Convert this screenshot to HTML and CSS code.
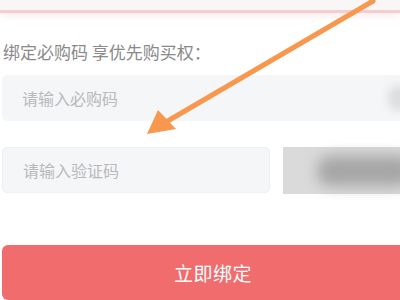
FILE: index.html
```html
<!DOCTYPE html>
<html lang="zh-CN">
<head>
    <meta charset="UTF-8">
    <title>绑定必购码</title>
    <link rel="stylesheet" href="styles.css">
</head>
<body>
    <div class="page">
        <div class="top-bar"></div>

        <div class="form">
            <div class="form-label">绑定必购码 享优先购买权：</div>

            <div class="field field-wide">
                <input type="text" placeholder="请输入必购码">
                <span class="field-blur"></span>
            </div>

            <div class="code-row">
                <div class="field field-code">
                    <input type="text" placeholder="请输入验证码">
                </div>
                <div class="captcha"><span class="captcha-text"></span></div>
            </div>

            <button class="bind-btn">立即绑定</button>
        </div>

        <!-- annotation arrow drawn over the page -->
        <svg class="arrow" width="400" height="300" viewBox="0 0 400 300">
            <line x1="373" y1="1" x2="166" y2="122" stroke="#f7984e" stroke-width="5" stroke-linecap="round"/>
            <polygon points="147,134 158,110 176,129" fill="#f7984e"/>
        </svg>
    </div>
</body>
</html>
```

FILE: styles.css
```css
body {
    margin: 0;
    background: #fff;
    font-family: "Noto Sans CJK SC", "Noto Sans", sans-serif;
    overflow: hidden;
}
.page {
    position: relative;
    width: 400px;
    height: 300px;
    overflow: hidden;
}
.top-bar {
    height: 10px;
    background: #faf6f6;
    border-bottom: 3px solid #f4cdd0;
    box-shadow: 0 3px 6px rgba(240, 200, 200, 0.35);
}
.form {
    padding: 0 0 0 2px;
}
.form-label {
    margin: 26px 0 0 1px;
    font-size: 17px;
    line-height: 26px;
    color: #8a8a8a;
}
.field {
    position: relative;
    height: 46px;
    background: #f5f6f8;
    border-radius: 5px;
    box-sizing: border-box;
}
.field input {
    width: 100%;
    height: 100%;
    box-sizing: border-box;
    border: none;
    background: transparent;
    padding: 0 0 0 20px;
    font-family: inherit;
    font-size: 16px;
    outline: none;
}
.field input::placeholder {
    color: #b9b9bc;
}
.field-wide {
    margin-top: 10px;
    width: 420px;
}
.field-blur {
    position: absolute;
    right: 14px;
    top: 10px;
    width: 20px;
    height: 26px;
    border-radius: 50%;
    background: #dcdcde;
    filter: blur(5px);
}
.code-row {
    display: flex;
    gap: 13px;
    margin-top: 26px;
}
.field-code {
    width: 268px;
    flex: none;
    border: 1px solid #eeeff1;
}
.captcha {
    flex: none;
    width: 130px;
    height: 47px;
    background: #dadada;
    display: flex;
    align-items: center;
    padding-left: 34px;
    box-sizing: border-box;
}
.captcha-text {
    width: 96px;
    height: 30px;
    border-radius: 14px;
    background: #a6a6a6;
    filter: blur(7px);
}
.bind-btn {
    display: block;
    margin-top: 51px;
    width: 420px;
    height: 55px;
    border: none;
    border-radius: 6px;
    background: #f16c6d;
    color: #fff;
    font-family: inherit;
    font-size: 19px;
    padding: 0;
    text-align: left;
    text-indent: 172px;
    letter-spacing: 0.5px;
}
.arrow {
    position: absolute;
    left: 0;
    top: 0;
}
```
